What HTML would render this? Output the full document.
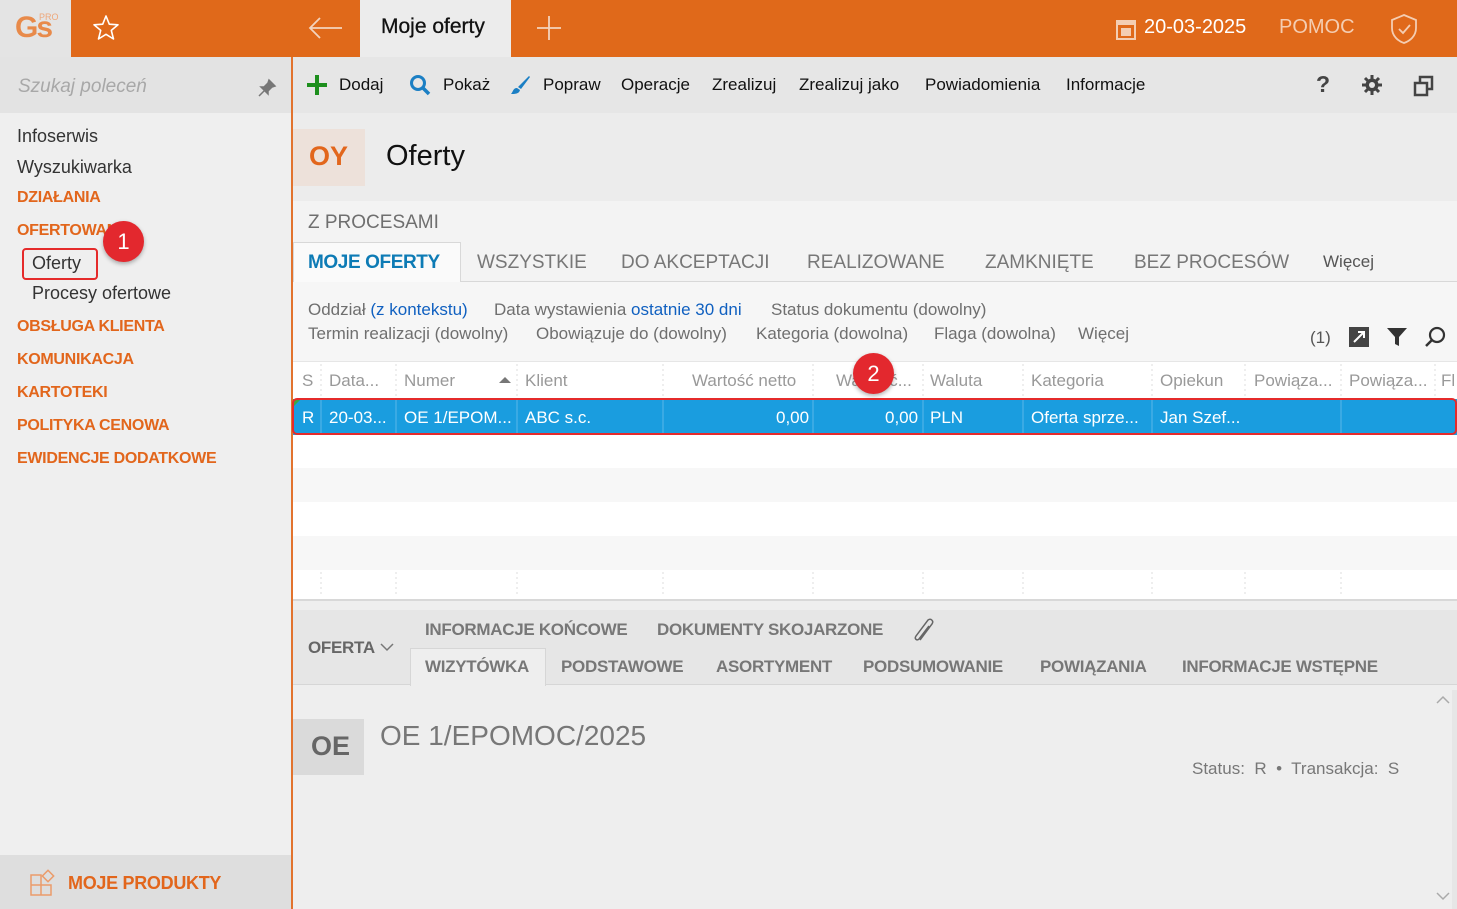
<!DOCTYPE html>
<html><head><meta charset="utf-8"><style>
*{margin:0;padding:0;box-sizing:border-box}
body{width:1457px;height:909px;overflow:hidden;font-family:"Liberation Sans",sans-serif;background:#f3f3f3;position:relative;color:#333}
.a{position:absolute;white-space:nowrap}
.t{font-size:17px}
.or{color:#e2661c}
.g{color:#6f6f6f}
.bl{color:#1060c0}
.up{font-size:16px;font-weight:bold;letter-spacing:-.3px}
</style></head><body>
<!-- top bar -->
<div class="a" style="left:0;top:0;width:1457px;height:57px;background:#e0691a"></div>
<div class="a" style="left:0;top:0;width:71px;height:57px;background:#e4e4e4"></div>
<div class="a" style="left:15px;top:11px;font-size:30px;font-weight:bold;color:#e88a4a;letter-spacing:-2px">Gs</div>
<div class="a" style="left:39px;top:12px;font-size:9px;color:#eea77a">PRO</div>
<svg class="a" style="left:92px;top:14px" width="28" height="28" viewBox="0 0 28 28"><path d="M14 2 L17.3 10.2 26 10.8 19.3 16.4 21.5 25 14 20.3 6.5 25 8.7 16.4 2 10.8 10.7 10.2Z" fill="none" stroke="#fff" stroke-width="1.6" stroke-linejoin="round"/></svg>
<svg class="a" style="left:308px;top:16px" width="36" height="24"><path d="M2 12 H34 M12 2 L2 12 12 22" fill="none" stroke="#f3d3bd" stroke-width="1.8"/></svg>
<div class="a" style="left:360px;top:0;width:151px;height:57px;background:#ececec"></div>
<div class="a" style="left:381px;top:15px;font-size:21px;color:#111;-webkit-text-stroke:0.3px #111">Moje oferty</div>
<svg class="a" style="left:536px;top:15px" width="26" height="26"><path d="M13 1V25M1 13H25" stroke="#f3d3bd" stroke-width="1.8"/></svg>
<svg class="a" style="left:1116px;top:18px" width="20" height="22"><rect x="1" y="3" width="18" height="18" fill="none" stroke="#f4cdb2" stroke-width="2"/><rect x="1" y="3" width="18" height="4" fill="#f4cdb2"/><rect x="5" y="10" width="10" height="8" fill="#f4cdb2"/></svg>
<div class="a" style="left:1144px;top:16px;font-size:20px;color:#fff">20-03-2025</div>
<div class="a" style="left:1279px;top:16px;font-size:20px;color:#f4cdb2">POMOC</div>
<svg class="a" style="left:1389px;top:13px" width="30" height="32"><path d="M15 2 L27 7 V15 C27 23 21 28 15 30 C9 28 3 23 3 15 V7Z" fill="none" stroke="#f4cdb2" stroke-width="1.8"/><path d="M10 16 L14 20 21 12" fill="none" stroke="#f4cdb2" stroke-width="1.8"/></svg>
<!-- sidebar -->
<div class="a" style="left:0;top:57px;width:291px;height:852px;background:#efefef"></div>
<div class="a" style="left:0;top:57px;width:291px;height:56px;background:#e3e3e3"></div>
<div class="a" style="left:18px;top:76px;font-size:19px;font-style:italic;color:#a8a8a8">Szukaj poleceń</div>
<svg class="a" style="left:257px;top:78px" width="20" height="20"><path d="M12 2 L18 8 15 9 11 13 11 16 4 9 7 9 11 5Z M7 13 L2 18" fill="#777" stroke="#777" stroke-width="1.5"/></svg>
<div class="a" style="left:291px;top:57px;width:2px;height:852px;background:#e2732e"></div>
<div class="a" style="left:17px;top:126px;font-size:18px;color:#333">Infoserwis</div>
<div class="a" style="left:17px;top:157px;font-size:18px;color:#333">Wyszukiwarka</div>
<div class="a up or" style="left:17px;top:189px">DZIAŁANIA</div>
<div class="a up or" style="left:17px;top:222px">OFERTOWANIE</div>
<div class="a" style="left:32px;top:253px;font-size:18px;color:#333">Oferty</div>
<div class="a" style="left:22px;top:248px;width:76px;height:32px;border:2px solid #e52b2b;border-radius:4px"></div>
<div class="a" style="left:32px;top:283px;font-size:18px;color:#333">Procesy ofertowe</div>
<div class="a" style="left:103px;top:221px;width:41px;height:41px;border-radius:50%;background:#e3282e;box-shadow:0 2px 4px rgba(0,0,0,.3);color:#fff;font-size:22px;text-align:center;line-height:41px">1</div>
<div class="a up or" style="left:17px;top:318px">OBSŁUGA KLIENTA</div>
<div class="a up or" style="left:17px;top:351px">KOMUNIKACJA</div>
<div class="a up or" style="left:17px;top:384px">KARTOTEKI</div>
<div class="a up or" style="left:17px;top:417px">POLITYKA CENOWA</div>
<div class="a up or" style="left:17px;top:450px">EWIDENCJE DODATKOWE</div>
<div class="a" style="left:0;top:855px;width:291px;height:54px;background:#dedede"></div>
<svg class="a" style="left:29px;top:869px" width="28" height="28"><path d="M2 6H12V26H2ZM2 16H22V26H12" fill="none" stroke="#eb9b6a" stroke-width="1.5"/><rect x="15" y="3" width="8" height="8" transform="rotate(45 19 7)" fill="none" stroke="#eb9b6a" stroke-width="1.5"/></svg>
<div class="a" style="left:68px;top:873px;font-size:18px;font-weight:bold;color:#e2661c;letter-spacing:-.3px">MOJE PRODUKTY</div>
<!-- toolbar -->
<div class="a" style="left:293px;top:57px;width:1164px;height:56px;background:#e6e6e6"></div>
<svg class="a" style="left:306px;top:74px" width="22" height="22"><path d="M11 1V21M1 11H21" stroke="#1d8f1d" stroke-width="4"/></svg>
<div class="a t" style="left:339px;top:75px;color:#111">Dodaj</div>
<svg class="a" style="left:409px;top:74px" width="22" height="22"><circle cx="9" cy="9" r="6.5" fill="none" stroke="#1b7fc4" stroke-width="3"/><path d="M13.5 13.5L20 20" stroke="#1b7fc4" stroke-width="3.5"/></svg>
<div class="a t" style="left:443px;top:75px;color:#111">Pokaż</div>
<svg class="a" style="left:509px;top:74px" width="22" height="22"><path d="M20 2L9 13 12 15 21 3Z" fill="#1b7fc4"/><path d="M8 14 C4 14 4 18 2 20 C6 20 10 20 11 16Z" fill="#1b7fc4"/></svg>
<div class="a t" style="left:543px;top:75px;color:#111">Popraw</div>
<div class="a t" style="left:621px;top:75px;color:#111">Operacje</div>
<div class="a t" style="left:712px;top:75px;color:#111">Zrealizuj</div>
<div class="a t" style="left:799px;top:75px;color:#111">Zrealizuj jako</div>
<div class="a t" style="left:925px;top:75px;color:#111">Powiadomienia</div>
<div class="a t" style="left:1066px;top:75px;color:#111">Informacje</div>
<div class="a" style="left:1316px;top:71px;font-size:23px;font-weight:bold;color:#444">?</div>
<svg class="a" style="left:1361px;top:74px" width="22" height="22" viewBox="0 0 22 22"><g stroke="#444" stroke-width="3"><path d="M11 1V21M1 11H21M4 4L18 18M18 4L4 18"/></g><circle cx="11" cy="11" r="6.5" fill="#444"/><circle cx="11" cy="11" r="3" fill="#e6e6e6"/></svg>
<svg class="a" style="left:1413px;top:75px" width="22" height="22"><rect x="7" y="2" width="12" height="12" fill="none" stroke="#444" stroke-width="2.5"/><rect x="2" y="8" width="12" height="12" fill="#e6e6e6" stroke="#444" stroke-width="2.5"/></svg>
<!-- header -->
<div class="a" style="left:293px;top:113px;width:1164px;height:88px;background:#ececec"></div>
<div class="a" style="left:293px;top:129px;width:72px;height:57px;background:#ede1da"></div>
<div class="a" style="left:309px;top:141px;font-size:27px;font-weight:bold;color:#e2661c">OY</div>
<div class="a" style="left:386px;top:140px;font-size:29px;color:#111">Oferty</div>
<div class="a" style="left:308px;top:212px;font-size:19px;color:#6f6f6f">Z PROCESAMI</div>
<div class="a" style="left:293px;top:281px;width:1164px;height:1px;background:#d8d8d8"></div>
<div class="a" style="left:293px;top:242px;width:168px;height:40px;background:#fafafa;border:1px solid #d8d8d8;border-bottom:none"></div>
<div class="a" style="left:308px;top:252px;font-size:19px;font-weight:bold;color:#0d7bb5;letter-spacing:-.4px">MOJE OFERTY</div>
<div class="a" style="left:477px;top:252px;font-size:19px;color:#777">WSZYSTKIE</div>
<div class="a" style="left:621px;top:252px;font-size:19px;color:#777">DO AKCEPTACJI</div>
<div class="a" style="left:807px;top:252px;font-size:19px;color:#777">REALIZOWANE</div>
<div class="a" style="left:985px;top:252px;font-size:19px;color:#777">ZAMKNIĘTE</div>
<div class="a" style="left:1134px;top:252px;font-size:19px;color:#777">BEZ PROCESÓW</div>
<div class="a" style="left:1323px;top:252px;font-size:17px;color:#555">Więcej</div>
<div class="a" style="left:293px;top:282px;width:1164px;height:79px;background:#f6f6f6"></div>
<div class="a t g" style="left:308px;top:300px">Oddział <span class="bl">(z kontekstu)</span></div>
<div class="a t g" style="left:494px;top:300px">Data wystawienia <span class="bl">ostatnie 30 dni</span></div>
<div class="a t g" style="left:771px;top:300px">Status dokumentu (dowolny)</div>
<div class="a t g" style="left:308px;top:324px">Termin realizacji (dowolny)</div>
<div class="a t g" style="left:536px;top:324px">Obowiązuje do (dowolny)</div>
<div class="a t g" style="left:756px;top:324px">Kategoria (dowolna)</div>
<div class="a t g" style="left:934px;top:324px">Flaga (dowolna)</div>
<div class="a t g" style="left:1078px;top:324px">Więcej</div>
<div class="a t" style="left:1310px;top:328px;color:#555">(1)</div>
<svg class="a" style="left:1349px;top:327px" width="20" height="20"><rect x="0" y="0" width="20" height="20" fill="#444"/><path d="M5 15L15 5M9 5H15V11" stroke="#fff" stroke-width="2" fill="none"/></svg>
<svg class="a" style="left:1387px;top:327px" width="20" height="20"><path d="M0 1H20L12 10V19L8 17V10Z" fill="#333"/></svg>
<svg class="a" style="left:1424px;top:326px" width="22" height="22"><circle cx="13" cy="9" r="7" fill="none" stroke="#333" stroke-width="2.2"/><path d="M8 14L2 20" stroke="#333" stroke-width="2.5"/></svg>
<!-- grid -->
<div class="a" style="left:293px;top:361px;width:1164px;height:240px;background:#fff;border-top:1px solid #e6e6e6"></div>
<div class="a" style="left:293px;top:468px;width:1164px;height:34px;background:#f7f7f7"></div>
<div class="a" style="left:293px;top:536px;width:1164px;height:34px;background:#f7f7f7"></div>
<div class="a" style="left:293px;top:599px;width:1164px;height:2px;background:#d8d8d8"></div>
<svg class="a" style="left:293px;top:362px" width="1164" height="237"><g stroke="#ddd" stroke-dasharray="2 3"><path d="M28 2V35M103 2V35M224 2V35M370 2V35M520 2V35M630 2V35M730 2V35M859 2V35M952 2V35M1048 2V35M1142 2V35"/><path d="M28 210V235M103 210V235M224 210V235M370 210V235M520 210V235M630 210V235M730 210V235M859 210V235M952 210V235M1048 210V235"/></g></svg>
<div class="a t" style="left:302px;top:371px;color:#999">S</div>
<div class="a t" style="left:329px;top:371px;color:#999">Data...</div>
<div class="a t" style="left:404px;top:371px;color:#999">Numer</div>
<svg class="a" style="left:499px;top:376px" width="12" height="8"><path d="M0 7L6 1 12 7Z" fill="#777"/></svg>
<div class="a t" style="left:525px;top:371px;color:#999">Klient</div>
<div class="a t" style="left:692px;top:371px;color:#999">Wartość netto</div>
<div class="a t" style="left:836px;top:371px;color:#999">Wartość...</div>
<div class="a t" style="left:930px;top:371px;color:#999">Waluta</div>
<div class="a t" style="left:1031px;top:371px;color:#999">Kategoria</div>
<div class="a t" style="left:1160px;top:371px;color:#999">Opiekun</div>
<div class="a t" style="left:1254px;top:371px;color:#999">Powiąza...</div>
<div class="a t" style="left:1349px;top:371px;color:#999">Powiąza...</div>
<div class="a t" style="left:1441px;top:371px;color:#999">Fl</div>
<div class="a" style="left:293px;top:399px;width:1164px;height:36px;background:#1a9ddf"></div>
<svg class="a" style="left:293px;top:399px" width="1164" height="36"><path d="M0 0H8L0 8Z" fill="#3ca845"/><g stroke="#5bb8e8"><path d="M28 0V36M103 0V36M224 0V36M370 0V36M520 0V36M630 0V36M730 0V36M859 0V36M1048 0V36"/></g></svg>
<div class="a" style="left:292px;top:398px;width:1165px;height:37px;border:2px solid #e52b2b;border-radius:5px"></div>
<div class="a t" style="left:302px;top:408px;color:#fff">R</div>
<div class="a t" style="left:329px;top:408px;color:#fff">20-03...</div>
<div class="a t" style="left:404px;top:408px;color:#fff">OE 1/EPOM...</div>
<div class="a t" style="left:525px;top:408px;color:#fff">ABC s.c.</div>
<div class="a t" style="left:776px;top:408px;color:#fff">0,00</div>
<div class="a t" style="left:885px;top:408px;color:#fff">0,00</div>
<div class="a t" style="left:930px;top:408px;color:#fff">PLN</div>
<div class="a t" style="left:1031px;top:408px;color:#fff">Oferta sprze...</div>
<div class="a t" style="left:1160px;top:408px;color:#fff">Jan Szef...</div>
<div class="a" style="left:853px;top:353px;width:41px;height:41px;border-radius:50%;background:#e3282e;box-shadow:0 2px 4px rgba(0,0,0,.3);color:#fff;font-size:22px;text-align:center;line-height:41px">2</div>
<!-- bottom panel -->
<div class="a" style="left:293px;top:601px;width:1164px;height:308px;background:#eeeeee"></div>
<div class="a" style="left:293px;top:610px;width:1164px;height:75px;background:#e6e6e6;border-bottom:1px solid #d6d6d6"></div>
<div class="a" style="left:308px;top:638px;font-size:17px;font-weight:bold;color:#666;letter-spacing:-.3px">OFERTA</div>
<svg class="a" style="left:380px;top:642px" width="14" height="10"><path d="M1 2L7 8 13 2" fill="none" stroke="#777" stroke-width="1.5"/></svg>
<div class="a" style="left:425px;top:620px;font-size:17px;font-weight:bold;color:#777;letter-spacing:-.3px">INFORMACJE KOŃCOWE</div>
<div class="a" style="left:657px;top:620px;font-size:17px;font-weight:bold;color:#777;letter-spacing:-.3px">DOKUMENTY SKOJARZONE</div>
<svg class="a" style="left:911px;top:616px" width="26" height="28"><path d="M9 24L21 8C23 5 20 2 17 4L5 20C3 23 6 25 8 23L18 10" fill="none" stroke="#666" stroke-width="1.5"/></svg>
<div class="a" style="left:410px;top:648px;width:136px;height:38px;background:#eeeeee;border:1px solid #d6d6d6;border-bottom:none"></div>
<div class="a" style="left:425px;top:657px;font-size:17px;font-weight:bold;color:#777;letter-spacing:-.3px">WIZYTÓWKA</div>
<div class="a" style="left:561px;top:657px;font-size:17px;font-weight:bold;color:#777;letter-spacing:-.3px">PODSTAWOWE</div>
<div class="a" style="left:716px;top:657px;font-size:17px;font-weight:bold;color:#777;letter-spacing:-.3px">ASORTYMENT</div>
<div class="a" style="left:863px;top:657px;font-size:17px;font-weight:bold;color:#777;letter-spacing:-.3px">PODSUMOWANIE</div>
<div class="a" style="left:1040px;top:657px;font-size:17px;font-weight:bold;color:#777;letter-spacing:-.3px">POWIĄZANIA</div>
<div class="a" style="left:1182px;top:657px;font-size:17px;font-weight:bold;color:#777;letter-spacing:-.3px">INFORMACJE WSTĘPNE</div>
<div class="a" style="left:293px;top:719px;width:71px;height:56px;background:#dadada"></div>
<div class="a" style="left:311px;top:731px;font-size:27px;font-weight:bold;color:#666">OE</div>
<div class="a" style="left:380px;top:720px;font-size:28px;color:#777">OE 1/EPOMOC/2025</div>
<div class="a t" style="left:1192px;top:759px;color:#777">Status:&nbsp; R &nbsp;•&nbsp; Transakcja:&nbsp; S</div>
<div class="a" style="left:1452px;top:690px;width:5px;height:219px;background:#e6e6e6"></div>
<svg class="a" style="left:1436px;top:695px" width="14" height="10"><path d="M1 8L7 2 13 8" fill="none" stroke="#aaa" stroke-width="1.5"/></svg>
<svg class="a" style="left:1436px;top:891px" width="14" height="10"><path d="M1 2L7 8 13 2" fill="none" stroke="#aaa" stroke-width="1.5"/></svg>
</body></html>
